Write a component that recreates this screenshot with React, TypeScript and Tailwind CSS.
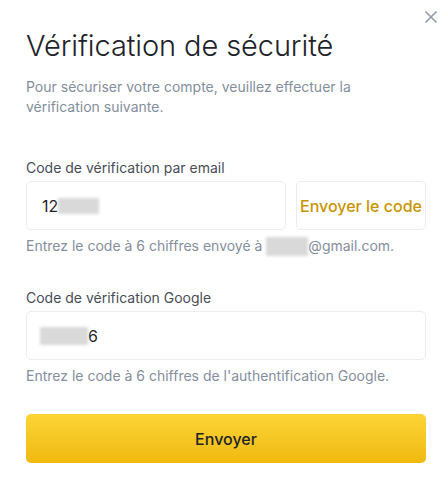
import React, { useState } from "react";

const Blur = ({ className }: { className: string }) => (
  <span className={"inline-block bg-[#d9d9d9] blur-[1.5px] align-middle " + className}></span>
);

const App = () => {
  const [email] = useState("12");

  return (
    <div className="relative w-[448px] h-[478px] bg-white text-[#1e2329] font-['Inter',sans-serif]">
      <button className="absolute right-[9px] top-[9px] w-4 h-4 flex items-center justify-center text-[#929aa5]">
        <svg width="14" height="14" viewBox="0 0 14 14" fill="none" stroke="currentColor" strokeWidth="1.6">
          <path d="M1.5 1.5l11 11M12.5 1.5l-11 11" />
        </svg>
      </button>

      <div className="pl-[26px] pr-[22px] pt-[26px]">
        <h1 className="text-[29px] leading-[40px] font-light tracking-[-0.1px]">Vérification de sécurité</h1>
        <p className="mt-[11px] text-[14px] leading-[20px] text-[#848e9c]">
          Pour sécuriser votre compte, veuillez effectuer la vérification suivante.
        </p>

        <div className="mt-[41px] text-[14px] leading-[20px] text-[#474d57]">Code de vérification par email</div>
        <div className="mt-[3px] flex gap-[10px]">
          <div className="flex-1 h-[49px] border border-[#eaecef] rounded-[5px] flex items-center px-[15px] text-[16px]">
            <span>{email}</span>
            <Blur className="w-[41px] h-[16px]" />
          </div>
          <button className="w-[130px] h-[49px] border border-[#eaecef] rounded-[5px] text-[#c99400] text-[16px] font-medium">
            Envoyer le code
          </button>
        </div>
        <div className="mt-[6px] text-[14px] leading-[20px] text-[#848e9c] flex items-center">
          Entrez le code à 6 chiffres envoyé à&nbsp;<Blur className="w-[42px] h-[19px]" />@gmail.com.
        </div>

        <div className="mt-[32px] text-[14px] leading-[20px] text-[#474d57]">Code de vérification Google</div>
        <div className="mt-[3px] h-[49px] border border-[#eaecef] rounded-[5px] flex items-center px-[13px] text-[16px]">
          <Blur className="w-[48px] h-[18px]" />
          <span>6</span>
        </div>
        <div className="mt-[6px] text-[14px] leading-[20px] text-[#848e9c]">
          Entrez le code à 6 chiffres de l'authentification Google.
        </div>

        <button className="mt-[28px] w-full h-[49px] rounded-[5px] bg-gradient-to-b from-[#fcd535] to-[#f0b90b] text-[16px] font-medium">
          Envoyer
        </button>
      </div>
    </div>
  );
};

export default App;
